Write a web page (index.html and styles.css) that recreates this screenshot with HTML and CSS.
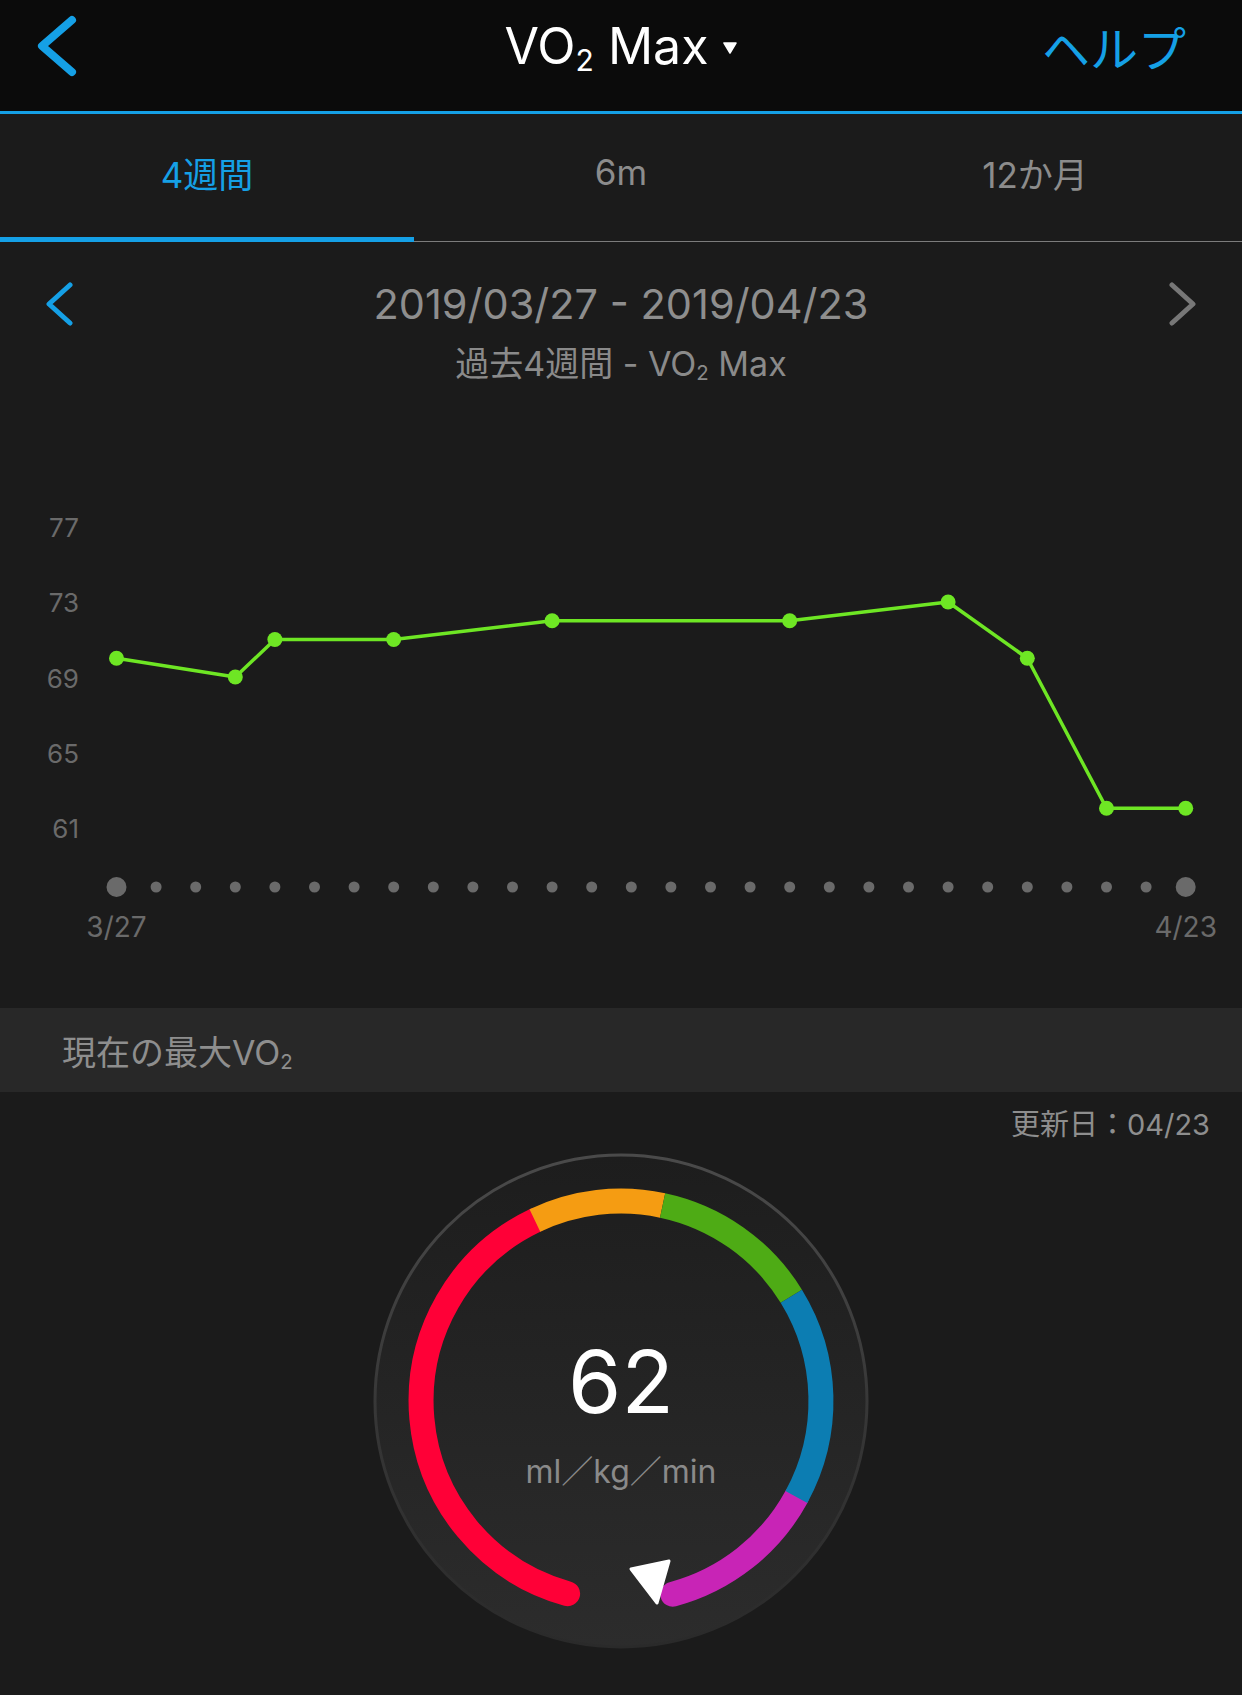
FILE: index.html
```html
<!DOCTYPE html>
<html lang="ja">
<head>
<meta charset="utf-8">
<title>VO2 Max</title>
<link rel="stylesheet" href="styles.css">
</head>
<body>
<header class="topbar">
  <div class="topbar-left">
    <svg class="back" width="50" height="70" viewBox="0 0 50 70"><path d="M36,9 L6,35 L36,61" fill="none" stroke="#15a0e6" stroke-width="8" stroke-linecap="round" stroke-linejoin="round"/></svg>
  </div>
  <div class="title"><span>VO<sub>2</sub> Max</span><svg class="caret" width="14" height="12" viewBox="0 0 14 12"><polygon points="1,1 13,1 7,11" fill="#fff" stroke="#fff" stroke-width="1.5" stroke-linejoin="round"/></svg></div>
  <div class="topbar-right"><span class="help">ヘルプ</span></div>
</header>

<nav class="tabs">
  <div class="tab active"><span>4週間</span></div>
  <div class="tab"><span>6m</span></div>
  <div class="tab"><span>12か月</span></div>
</nav>

<section class="range">
  <div class="range-row">
    <svg class="nav" width="34" height="44" viewBox="0 0 34 44"><path d="M26,3 L5,22 L26,41" fill="none" stroke="#15a0e6" stroke-width="5" stroke-linecap="round" stroke-linejoin="round"/></svg>
    <div class="range-dates">2019/03/27 - 2019/04/23</div>
    <svg class="nav" width="34" height="44" viewBox="0 0 34 44"><path d="M8,3 L29,22 L8,41" fill="none" stroke="#777" stroke-width="5" stroke-linecap="round" stroke-linejoin="round"/></svg>
  </div>
  <div class="range-sub">過去4週間 - VO<sub>2</sub> Max</div>
</section>

<svg class="chart" width="1242" height="608" viewBox="0 400 1242 608">
  <g class="ylabels">
    <text x="79" y="536.5">77</text>
    <text x="79" y="612">73</text>
    <text x="79" y="687.5">69</text>
    <text x="79" y="762.5">65</text>
    <text x="79" y="837.5">61</text>
  </g>
  <polyline points="116.5,658.3 235.3,677 274.9,639.5 393.7,639.5 552.1,620.8 789.7,620.8 948.1,602 1027.3,658.3 1106.5,808.3 1185.7,808.3" fill="none" stroke="#6ee624" stroke-width="3.5" stroke-linejoin="round"/>
  <g fill="#6ee624">
    <circle cx="116.5" cy="658.3" r="7.5"/>
    <circle cx="235.3" cy="677" r="7.5"/>
    <circle cx="274.9" cy="639.5" r="7.5"/>
    <circle cx="393.7" cy="639.5" r="7.5"/>
    <circle cx="552.1" cy="620.8" r="7.5"/>
    <circle cx="789.7" cy="620.8" r="7.5"/>
    <circle cx="948.1" cy="602" r="7.5"/>
    <circle cx="1027.3" cy="658.3" r="7.5"/>
    <circle cx="1106.5" cy="808.3" r="7.5"/>
    <circle cx="1185.7" cy="808.3" r="7.5"/>
  </g>
  <g fill="#6a6a6a">
    <circle cx="116.5" cy="887" r="10"/>
    <circle cx="156.1" cy="887" r="5.5"/>
    <circle cx="195.7" cy="887" r="5.5"/>
    <circle cx="235.3" cy="887" r="5.5"/>
    <circle cx="274.9" cy="887" r="5.5"/>
    <circle cx="314.5" cy="887" r="5.5"/>
    <circle cx="354.1" cy="887" r="5.5"/>
    <circle cx="393.7" cy="887" r="5.5"/>
    <circle cx="433.3" cy="887" r="5.5"/>
    <circle cx="472.9" cy="887" r="5.5"/>
    <circle cx="512.5" cy="887" r="5.5"/>
    <circle cx="552.1" cy="887" r="5.5"/>
    <circle cx="591.7" cy="887" r="5.5"/>
    <circle cx="631.3" cy="887" r="5.5"/>
    <circle cx="670.9" cy="887" r="5.5"/>
    <circle cx="710.5" cy="887" r="5.5"/>
    <circle cx="750.1" cy="887" r="5.5"/>
    <circle cx="789.7" cy="887" r="5.5"/>
    <circle cx="829.3" cy="887" r="5.5"/>
    <circle cx="868.9" cy="887" r="5.5"/>
    <circle cx="908.5" cy="887" r="5.5"/>
    <circle cx="948.1" cy="887" r="5.5"/>
    <circle cx="987.7" cy="887" r="5.5"/>
    <circle cx="1027.3" cy="887" r="5.5"/>
    <circle cx="1066.9" cy="887" r="5.5"/>
    <circle cx="1106.5" cy="887" r="5.5"/>
    <circle cx="1146.1" cy="887" r="5.5"/>
    <circle cx="1185.7" cy="887" r="10"/>
  </g>
  <g class="xlabels">
    <text x="116.5" y="937">3/27</text>
    <text x="1185.7" y="937">4/23</text>
  </g>
</svg>

<div class="section-head"><span>現在の最大VO<sub>2</sub></span></div>
<div class="updated">更新日：04/23</div>

<div class="gauge">
  <svg class="gauge-svg" width="500" height="500" viewBox="-250 -250 500 500">
    <defs>
      <linearGradient id="disc" x1="0" y1="0" x2="0" y2="1">
        <stop offset="0" stop-color="#1d1d1d"/>
        <stop offset="1" stop-color="#2c2c2c"/>
      </linearGradient>
      <linearGradient id="rim" x1="0" y1="0" x2="0" y2="1">
        <stop offset="0" stop-color="#4a4a4a"/>
        <stop offset="0.55" stop-color="#363636"/>
        <stop offset="1" stop-color="#2a2a2a"/>
      </linearGradient>
    </defs>
    <circle r="246" fill="url(#disc)" stroke="url(#rim)" stroke-width="3"/>
    <g fill="none" stroke-width="25">
      <path d="M-53.4,192.7 A200,200 0 0 1 -86.1,-180.5" stroke="#ff0037" stroke-linecap="round"/>
      <path d="M175.4,96 A200,200 0 0 1 51.8,193.2" stroke="#c824b6" stroke-linecap="round"/>
      <path d="M-86.1,-180.5 A200,200 0 0 1 41.6,-195.6" stroke="#f59c12"/>
      <path d="M41.6,-195.6 A200,200 0 0 1 170.3,-104.8" stroke="#4eab15"/>
      <path d="M170.3,-104.8 A200,200 0 0 1 175.4,96" stroke="#0c7db2"/>
    </g>
    <polygon points="10,168 48,160 36,202" fill="#fff" stroke="#fff" stroke-width="3" stroke-linejoin="round"/>
  </svg>
  <div class="gauge-text">
    <div class="gauge-value">62</div>
    <div class="gauge-unit">ml／kg／min</div>
  </div>
</div>
</body>
</html>
```

FILE: styles.css
```css
* { box-sizing: border-box; }
html, body { margin: 0; padding: 0; }
body {
  width: 1242px;
  height: 1695px;
  overflow: hidden;
  background: #1b1b1b;
  color: #8c8c8c;
  font-family: Inter, "Noto Sans CJK JP", sans-serif;
}
sub {
  font-size: 0.6em;
  vertical-align: -0.22em;
  line-height: 0;
}

.topbar {
  display: grid;
  grid-template-columns: 1fr auto 1fr;
  align-items: center;
  height: 114px;
  padding-bottom: 20px;
  border-bottom: 3px solid #15a0e6;
  background: #0b0b0b;
}
.back { display: block; margin-left: 36px; }
.title {
  display: flex;
  align-items: center;
  gap: 15px;
  font-size: 50px;
  line-height: 1;
  color: #fff;
}
.caret { display: block; margin-top: 4px; }
.topbar-right { justify-self: end; }
.help {
  display: block;
  margin-right: 56px;
  font-family: "Noto Sans CJK JP", sans-serif;
  font-size: 48px;
  line-height: 1;
  color: #15a0e6;
}

.tabs {
  display: flex;
  height: 128px;
  box-shadow: inset 0 -1px 0 #7c7c7c;
}
.tab {
  flex: 1;
  display: flex;
  align-items: center;
  justify-content: center;
  padding-bottom: 12px;
  font-size: 35px;
  color: #8c8c8c;
}
.tab.active {
  color: #15a0e6;
  box-shadow: inset 0 -5px 0 #15a0e6;
}

.range { padding-top: 38px; }
.range-row {
  display: flex;
  align-items: center;
  padding: 0 44px;
}
.nav { display: block; flex: none; }
.range-dates {
  flex: 1;
  text-align: center;
  font-size: 41.5px;
  line-height: 48px;
  color: #8e8e8e;
}
.range-sub {
  margin-top: 14px;
  text-align: center;
  font-size: 34px;
  line-height: 44px;
  color: #8a8a8a;
}

.chart { display: block; margin-top: 14px; }
.ylabels text {
  font-family: Inter, sans-serif;
  font-size: 26px;
  fill: #6a6a6a;
  text-anchor: end;
}
.xlabels text {
  font-family: Inter, sans-serif;
  font-size: 28px;
  fill: #6a6a6a;
  text-anchor: middle;
}

.section-head {
  display: flex;
  align-items: center;
  height: 84px;
  padding-left: 62px;
  background: #282828;
  font-size: 34px;
  color: #8e8e8e;
}
.updated {
  margin-top: 15px;
  padding-right: 32px;
  text-align: right;
  font-size: 29px;
  line-height: 36px;
  color: #8e8e8e;
}

.gauge {
  display: grid;
  width: 500px;
  height: 500px;
  margin: 8px auto 0;
}
.gauge-svg { grid-area: 1 / 1; display: block; }
.gauge-text {
  grid-area: 1 / 1;
  display: flex;
  flex-direction: column;
  align-items: center;
  padding-top: 186px;
}
.gauge-value {
  font-size: 86px;
  line-height: 90px;
  color: #fff;
}
.gauge-unit {
  margin-top: 25px;
  font-size: 32px;
  line-height: 40px;
  color: #8a8a8a;
}
```
